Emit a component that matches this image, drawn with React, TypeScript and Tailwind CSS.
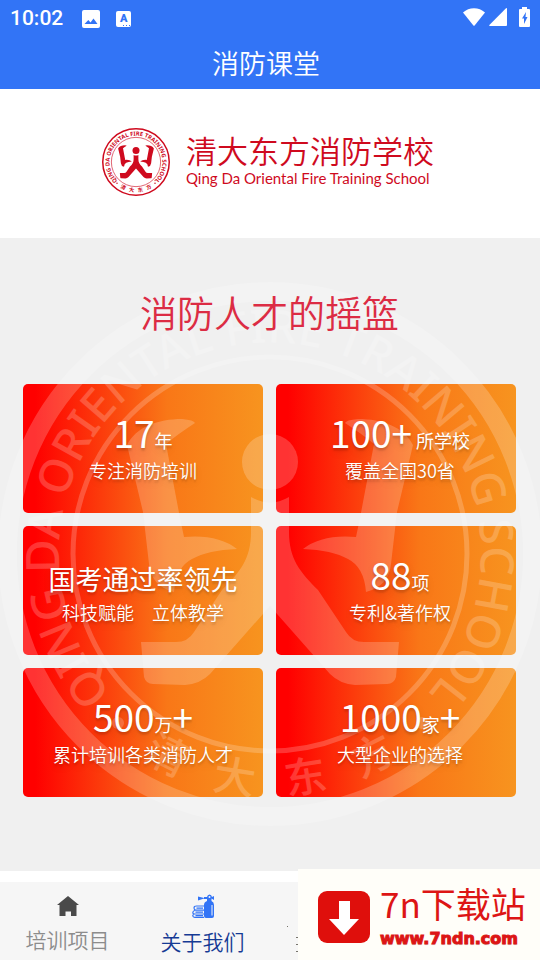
import React, { useId } from "react";

const statList = [
  {
    top: (
      <>
        17<small className="text-lg">年</small>
      </>
    ),
    text: "专注消防培训",
  },
  {
    top: (
      <>
        100+<small className="ml-1 text-lg">所学校</small>
      </>
    ),
    text: "覆盖全国30省",
  },
  {
    top: <span className="text-[27px]">国考通过率领先</span>,
    text: "科技赋能　立体教学",
  },
  {
    top: (
      <>
        88<small className="text-lg">项</small>
      </>
    ),
    text: "专利&著作权",
  },
  {
    top: (
      <>
        500<small className="text-lg">万</small>+
      </>
    ),
    text: "累计培训各类消防人才",
  },
  {
    top: (
      <>
        1000<small className="text-lg">家</small>+
      </>
    ),
    text: "大型企业的选择",
  },
];

const bottomChars = [
  { char: "清", angle: 27 },
  { char: "大", angle: 9 },
  { char: "东", angle: -9 },
  { char: "方", angle: -27 },
];

// Round school seal, drawn in currentColor
function Emblem({ className, ring }: { className: string; ring: number }) {
  const arcId = useId();
  const arm =
    "M-143 -109 C-134 -127 -112 -135 -88 -135 Q-76 -134 -75 -131 Q-92 -120 -104 -110 L-90 -36 L-86 -17 Q-52 -20 -33 -5 Q-62 -4 -78 5 Q-94 13 -96 38 Q-119 32 -121 10 L-127 -42 Z";

  return (
    <svg viewBox="-272 -272 544 544" className={className} aria-hidden="true">
      <defs>
        <path id={arcId} d="M-149 149 A211 211 0 1 1 149 149" />
      </defs>
      <circle r={272 - ring / 2} fill="none" stroke="currentColor" strokeWidth={ring} />
      <circle r="197" fill="none" stroke="currentColor" strokeWidth="5" />
      <text
        fill="currentColor"
        fontSize="46"
        textAnchor="middle"
        className="font-['Noto_Sans',sans-serif]"
      >
        <textPath href={"#" + arcId} startOffset="50%">
          QING DA ORIENTAL FIRE TRAINING SCHOOL
        </textPath>
      </text>
      {bottomChars.map((res, i) => (
        <text
          key={i}
          y="241"
          fill="currentColor"
          fontSize="42"
          textAnchor="middle"
          transform={`rotate(${res.angle})`}
        >
          {res.char}
        </text>
      ))}
      <circle cx="-152" cy="169" r="6" fill="currentColor" />
      <circle cx="152" cy="169" r="6" fill="currentColor" />
      <g fill="currentColor">
        <circle cy="-92" r="28" />
        <path d={arm} />
        <path d={arm} transform="scale(-1 1)" />
        <path d="M-19 -57 Q0 -46 19 -57 L19 -22 C19 5 30 18 48 36 L76 78 Q82 88 94 88 L129 88 L126 123 Q124 130 117 130 L85 131 Q70 130 60 120 L0 52 L-60 120 Q-70 130 -85 131 L-117 130 Q-124 130 -126 123 L-129 88 L-94 88 Q-82 88 -76 78 L-48 36 C-30 18 -19 5 -19 -22 Z" />
      </g>
    </svg>
  );
}

function StatusBar() {
  return (
    <div className="flex h-[38px] items-center justify-between px-[10px]">
      <div className="flex items-center">
        <span className="font-['Roboto',sans-serif] text-[21px] font-medium">10:02</span>
        <svg viewBox="0 0 18 18" className="ml-[19px] size-[18px]" aria-hidden="true">
          <path
            fill="currentColor"
            fillRule="evenodd"
            d="M2 0h14a2 2 0 0 1 2 2v14a2 2 0 0 1-2 2H2a2 2 0 0 1-2-2V2a2 2 0 0 1 2-2Zm.5 14h13l-4-5.5-3 4-2.200-2.500Z"
          />
        </svg>
        <span className="relative ml-4 flex h-4 w-[15px] items-center justify-center rounded-xs bg-white font-['Roboto',sans-serif] text-[11px] font-black text-[#3274f6]">
          A
          <svg viewBox="0 0 7 1" className="absolute right-px bottom-px w-[7px]" aria-hidden="true">
            <path fill="currentColor" d="M0 0h1v1H0zM3 0h1v1H3zM6 0h1v1H6z" />
          </svg>
        </span>
      </div>
      <div className="flex items-center pb-1">
        <svg viewBox="0 0 22 18" className="h-[18px] w-[22px]" aria-hidden="true">
          <path fill="currentColor" d="M0 4.500C6-1.200 16-1.200 22 4.500L11.600 17.500q-.6.6-1.200 0Z" />
        </svg>
        <svg viewBox="0 0 18 18" className="ml-1 size-[18px]" aria-hidden="true">
          <path fill="currentColor" d="M17 .3q1-.6 1 .7v16q0 1-1 1H1q-1.300 0-.6-1Z" />
        </svg>
        <svg viewBox="0 0 11 20" className="ml-3 h-5 w-[11px]" aria-hidden="true">
          <path
            fill="currentColor"
            fillRule="evenodd"
            d="M3 0h5v2h2q1 0 1 1v16q0 1-1 1H1q-1 0-1-1V3q0-1 1-1h2ZM7 5 3 11.500h2V17l3.500-7H6.500Z"
          />
        </svg>
      </div>
    </div>
  );
}

function Stats() {
  return (
    <section className="relative flex-1 overflow-hidden bg-[#f0f0f0] pt-[47px] pr-6 pb-[74px] pl-[23px]">
      <h2 className="relative z-10 text-center text-[37px] leading-[54px] font-[350] text-[#dc2c44]">
        消防人才的摇篮
      </h2>
      <div className="mt-[45px] grid grid-cols-2 gap-[13px]">
        {statList.map((res, i) => (
          <div
            key={i}
            className="flex h-[129px] flex-col items-center rounded-[5px] bg-linear-to-r/srgb from-[#ff0000] from-5% via-[#f97717] via-60% to-[#f7941f] pt-[22px] text-white even:pl-2"
          >
            <div className="relative z-10 h-[52px] text-[37px] leading-[52px] text-shadow-lg">
              {res.top}
            </div>
            <p className="relative z-10 text-lg leading-6 font-[350] text-shadow-lg">{res.text}</p>
          </div>
        ))}
      </div>
      <Emblem
        ring={19}
        className="pointer-events-none absolute top-[44px] left-1/2 w-[544px] -translate-x-1/2 font-medium text-white opacity-20"
      />
    </section>
  );
}

function TabBar() {
  return (
    <nav className="grid h-[78px] grid-cols-4 bg-[#f6f6f6]">
      <button className="flex flex-col items-center pt-[14px] text-[21px] leading-7 font-[350] text-[#8c8c8c]">
        <svg viewBox="0 0 22 20" className="mb-[9px] h-5 w-[22px] text-[#4a4a4a]" aria-hidden="true">
          <path fill="currentColor" d="M11 0 22 9h-2.500v11H14v-4.500H8.500V20H2.500V9H0Z" />
        </svg>
        培训项目
      </button>
      <button className="flex flex-col items-center pt-3 text-[21px] leading-7 font-[350] text-[#153a94]">
        <svg viewBox="0 0 22 24" className="mb-[9px] h-6 w-[22px] text-[#3274f6]" aria-hidden="true">
          <path
            fill="currentColor"
            d="M6 2.500 12 4V3h3q.5-2.500 2.500-2.500T20 3l2-1v4l-2.500-1.500V7Q22 8 22 11v11q0 2-2 2h-6q-2 0-2-2V11q0-3 3-4V5h-3v-.5L6 6.500Z"
          />
          <path
            fill="none"
            stroke="currentColor"
            strokeWidth="1.200"
            d="M12 12H4.500Q2 12 2 14t2 2.200h8M3 16.200Q.8 17 .8 18.500T3 20h9M2 20Q.6 21 .8 22t2 1.400H12M4.500 14.200H11M3.500 18.200H11M3.500 21.700H11"
          />
          <circle cx="17.500" cy="3" r="1" fill="#f6f6f6" />
          <path d="M20 11v10.500" stroke="#f6f6f6" strokeWidth="1" />
        </svg>
        关于我们
      </button>
      {/* edge of the next tab, mostly under the badge */}
      <svg viewBox="0 0 30 78" className="h-[78px] w-[30px]" aria-hidden="true">
        <path fill="#77746c" d="M17 44h1v1h-1zM26 55h2v1h-2zM26 62h2v1h-2zM26 69h2v1h-2z" />
      </svg>
    </nav>
  );
}

function SiteBadge() {
  return (
    <a
      href="#"
      className="absolute right-0 bottom-0 z-20 flex h-[91px] w-[242px] items-center bg-[#fffef9] pt-1 pl-5 text-[#dd1515]"
    >
      <svg viewBox="0 0 52 52" className="size-[52px] shrink-0" aria-hidden="true">
        <rect width="52" height="52" rx="9" fill="#df0f0c" />
        <path fill="#fff" d="M21 10h11v18h9L26 44 11 28h10Z" />
      </svg>
      <span className="ml-[10px] flex flex-col gap-1">
        <span className="text-[35px] leading-10">7n下载站</span>
        <span className="font-['DejaVu_Sans',sans-serif] text-base leading-6 font-bold [-webkit-text-stroke:1px_#dd1515] text-shadow-xs">
          www.7ndn.com
        </span>
      </span>
    </a>
  );
}

function App() {
  return (
    <div className="relative flex min-h-screen flex-col bg-white font-['Noto_Sans_CJK_SC',sans-serif]">
      <header className="bg-[#3274f6] text-white">
        <StatusBar />
        <h1 className="h-[51px] pr-2 text-center text-[27px] leading-[49px] font-[350]">消防课堂</h1>
      </header>

      {/* School logo */}
      <div className="flex h-[149px] items-center justify-center gap-4 pr-1 pb-1 text-[#cf0a1e]">
        <Emblem ring={12} className="size-[68px] font-bold" />
        <div className="pb-1">
          <div className="text-[31px] leading-9 font-[350]">清大东方消防学校</div>
          <div className="font-['Lato',sans-serif] text-[15px] leading-5">
            Qing Da Oriental Fire Training School
          </div>
        </div>
      </div>

      <Stats />
      <div className="h-[11px]" />
      <TabBar />
      <SiteBadge />
    </div>
  );
}

export default App;
